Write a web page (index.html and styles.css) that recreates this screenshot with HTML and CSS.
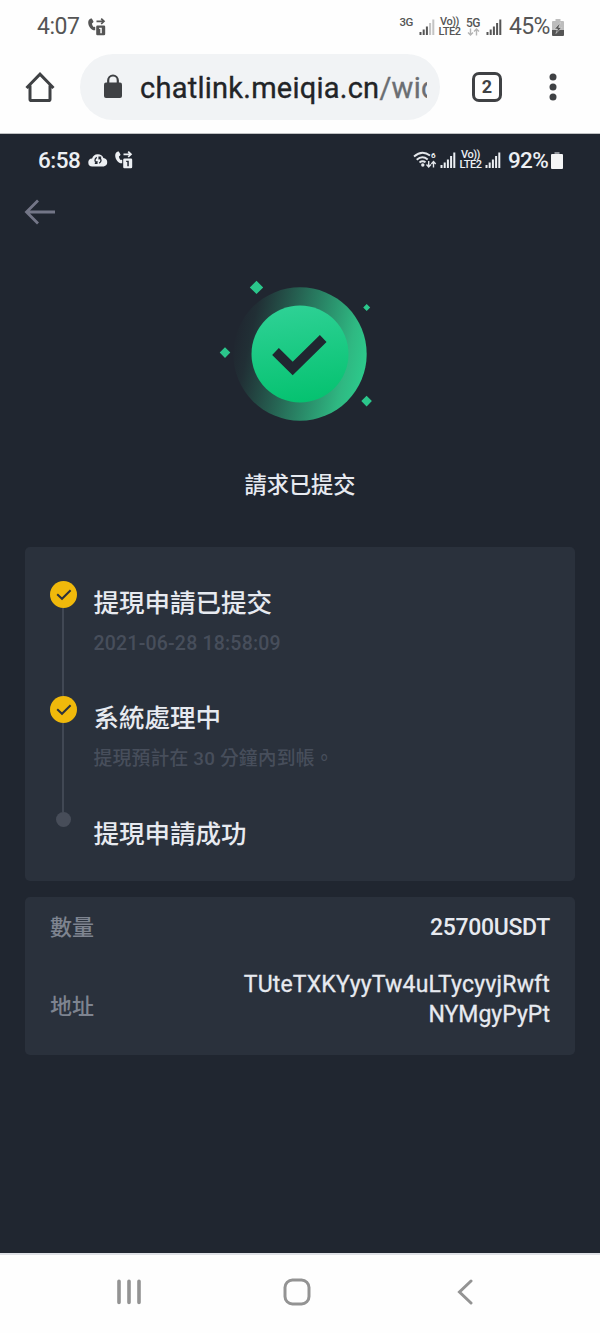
FILE: index.html
```html
<!DOCTYPE html>
<html lang="zh-Hant">
<head>
<meta charset="utf-8">
<title>請求已提交</title>
<link rel="stylesheet" href="styles.css">
</head>
<body>
<svg class="defs" width="0" height="0">
  <symbol id="call" viewBox="0 0 18 18">
    <path fill="currentColor" d="M1 1.800Q2.500.3 3.800.6L5.500 3.600Q5.600 4.600 3.900 5.500C4.100 7 4.800 8 5.600 8.900Q6.600 8.500 7.200 9V12.300C4 12.800.2 9 .2 4.500Q.2 2.700 1 1.800Z"/>
    <path fill="none" stroke="currentColor" stroke-width="1.700" d="M8.500 3.300h7.500M13.200.6 16 3.300 13.200 6"/>
    <path fill="currentColor" fill-rule="evenodd" d="M9.400 7.500H16q1.200 0 1.200 1.200V16q0 1.200-1.200 1.200H9.400q-1.200 0-1.200-1.200V8.700q0-1.200 1.200-1.200ZM11.200 9.700v1.300h1.100v4.300h1.500V9.700Z"/>
  </symbol>
  <symbol id="bars" viewBox="0 0 16 16">
    <path fill="currentColor" d="M.5 13h2v3h-2zM3.700 10.500h2V16h-2zM6.900 7.500h2V16h-2zM10.100 4h2v12h-2zM13.300.5h2V16h-2z"/>
  </symbol>
</svg>

<header class="status status-light">
  <span class="clock">4:07</span>
  <svg class="call"><use href="#call"/></svg>
  <span class="net net-3g">3G</span>
  <svg class="bars bars-weak" viewBox="0 0 16 16"><path fill="#555" d="M.5 13h2v3h-2zM3.700 10.500h2V16h-2zM6.900 7.500h2V16h-2z"/><path fill="#c4c4c4" d="M10.100 4h2v12h-2zM13.300.5h2V16h-2z"/></svg>
  <span class="volte"><span>Vo))</span><span>LTE2</span></span>
  <span class="net-5g"><span>5G</span><svg width="13" height="8" viewBox="0 0 13 8"><path fill="none" stroke="#b5b5b5" stroke-width="1.400" d="M3.500.5v6.500M1 4.500l2.500 2.500L6 4.500M9.500 7.500V1M7 3.500 9.500 1 12 3.500"/></svg></span>
  <svg class="bars"><use href="#bars"/></svg>
  <span class="percent">45%</span>
  <svg class="battery" viewBox="0 0 12 17"><path fill="#bdbdbd" d="M3.500 0h5v2H11q1 0 1 1v8H0V3q0-1 1-1h2.500Z"/><path fill="#555" d="M0 11h12v5q0 1-1 1H1q-1 0-1-1Z"/><path fill="#555" stroke="#eee" stroke-width=".5" d="M8.300 3.500 2.500 10h3l-1.500 4.500L9.600 8.500H6.700Z"/></svg>
</header>

<nav class="toolbar">
  <svg class="home" viewBox="0 0 32 32"><path fill="none" stroke="#3f4144" stroke-width="3" d="M2.500 17 16 3.200 29.500 17M6 14.500V28.200q0 1.300 1.300 1.300H24.700q1.300 0 1.300-1.300V14.500"/></svg>
  <div class="omnibox">
    <svg class="lock" viewBox="0 0 20 25"><rect x="1" y="8.500" width="18" height="15.500" rx="2" fill="#3f4144"/><path fill="none" stroke="#3f4144" stroke-width="2.200" d="M5.200 10V6.300a4.800 4.800 0 0 1 9.600 0V10"/></svg>
    <div class="url">chatlink.meiqia.cn<span class="path">/wid</span></div>
  </div>
  <span class="tabs">2</span>
  <svg class="more" viewBox="0 0 8 30"><g fill="#3f4144"><circle cx="4" cy="5" r="3.500"/><circle cx="4" cy="15" r="3.500"/><circle cx="4" cy="25" r="3.500"/></g></svg>
</nav>

<main class="app">
  <div class="status status-dark">
    <span class="clock">6:58</span>
    <svg class="cloud" viewBox="0 0 20 14"><path fill="#eceff3" d="M4.500 13.500a4 4 0 0 1-.4-8A6 6 0 0 1 15.400 5a4.300 4.300 0 0 1 .3 8.500Z"/><path fill="none" stroke="#202630" stroke-width="1.300" d="M8.800 4.300A3.300 3.300 0 0 0 8.800 10.200M8.900 8v2.400H6.800M11.200 10.200a3.300 3.300 0 0 0 0-5.900M11.100 6.500V4.100h2.100"/></svg>
    <svg class="call"><use href="#call"/></svg>
    <svg class="wifi" viewBox="0 0 25 18"><g fill="none" stroke="#e3e6ea" stroke-width="1.900"><path d="M1 5.500Q9 -1.500 17 4.500M3.700 8.700q5.500-4.700 11-.3M6.500 11.500q3-2.300 6-.2"/><path stroke-width="1.400" d="M15.700 10v6M13.500 13.500l2.200 2.500 2.200-2.500M20.500 16.500V10.500M18.300 13l2.200-2.500 2.200 2.500"/></g><circle cx="9.800" cy="14" r="1.700" fill="#e3e6ea"/><text class="wifi-gen" x="18" y="7.200">6</text></svg>
    <svg class="bars"><use href="#bars"/></svg>
    <span class="volte"><span>Vo))</span><span>LTE2</span></span>
    <svg class="bars bars-second"><use href="#bars"/></svg>
    <span class="percent">92%</span>
    <svg class="battery" viewBox="0 0 12 17"><path fill="#8d9198" d="M3.500 0h5v3h-5z"/><path fill="#f4f5f6" d="M1 2h10q1 0 1 1v13q0 1-1 1H1q-1 0-1-1V3q0-1 1-1Z"/></svg>
  </div>

  <svg class="back" viewBox="0 0 32 26"><path fill="none" stroke="#737687" stroke-width="2.800" d="M14 1.500 2.500 13 14 24.500M2.500 13H31"/></svg>

  <section class="result">
    <svg class="success" viewBox="0 0 160 144">
      <defs>
        <linearGradient id="ring" x1="0" y1=".38" x2="1" y2=".6"><stop offset="0" stop-color="#2ebd85" stop-opacity="0"/><stop offset=".12" stop-color="#2ebd85" stop-opacity=".06"/><stop offset=".5" stop-color="#2fc58a" stop-opacity=".5"/><stop offset=".85" stop-color="#31cc8d" stop-opacity=".88"/><stop offset="1" stop-color="#2dd491" stop-opacity=".95"/></linearGradient>
        <linearGradient id="disc" x1=".4" y1="0" x2=".55" y2="1"><stop offset="0" stop-color="#2ed195"/><stop offset="1" stop-color="#05c270"/></linearGradient>
      </defs>
      <circle cx="80" cy="76" r="66.700" fill="url(#ring)"/>
      <circle cx="80" cy="76" r="48.500" fill="url(#disc)"/>
      <path fill="none" stroke="#202630" stroke-width="9.500" d="M55.500 73.500 72.700 90.500 103.200 60.500"/>
      <g fill="#2bc68b"><path d="M36.500 2.700 43.200 9.400l-6.700 6.700-6.700-6.700zM146.700 26l3.500 3.500-3.500 3.500-3.500-3.500zM5 69.300l5.300 5.300L5 79.900-.3 74.600zM146.600 117.800l5.300 5.300-5.300 5.300-5.300-5.300z"/></g>
    </svg>
    <h1 class="heading">請求已提交</h1>
  </section>

  <section class="card steps">
    <div class="step">
      <div class="rail"><svg class="tick" viewBox="0 0 27 27"><circle cx="13.500" cy="13.500" r="13.500" fill="#f0b90b"/><path fill="none" stroke="#2b313b" stroke-width="2" d="M7.200 13.200 12 17.800 20.600 9.300"/></svg></div>
      <div class="body"><h2>提現申請已提交</h2><p class="date">2021-06-28 18:58:09</p></div>
    </div>
    <div class="step">
      <div class="rail"><svg class="tick" viewBox="0 0 27 27"><circle cx="13.500" cy="13.500" r="13.500" fill="#f0b90b"/><path fill="none" stroke="#2b313b" stroke-width="2" d="M7.200 13.200 12 17.800 20.600 9.300"/></svg></div>
      <div class="body"><h2>系統處理中</h2><p>提現預計在 30 分鐘內到帳。</p></div>
    </div>
    <div class="step">
      <div class="rail rail-last"><i class="dot"></i></div>
      <div class="body"><h2>提現申請成功</h2></div>
    </div>
  </section>

  <section class="card details">
    <div class="row"><span class="label">數量</span><span class="amount">25700USDT</span></div>
    <div class="row row-address"><span class="label">地址</span><span class="address"><span class="address-head">TUteTXKYyyTw4uLTycyvjRwft</span><br><span class="address-tail">NYMgyPyPt</span></span></div>
  </section>
</main>

<footer class="navbar">
  <svg width="26" height="26" viewBox="0 0 26 26"><path stroke="#939393" stroke-width="3.600" stroke-linecap="round" d="M3 2.300V23.500M13 2.300V23.500M23 2.300V23.500"/></svg>
  <svg class="nav-home" width="28" height="28" viewBox="0 0 28 28"><rect x="2" y="2" width="24" height="24" rx="7.500" fill="none" stroke="#939393" stroke-width="3"/></svg>
  <svg width="16" height="26" viewBox="0 0 16 26"><path fill="none" stroke="#939393" stroke-width="3" stroke-linecap="round" d="M14 2 2.500 13 14 24"/></svg>
</footer>
</body>
</html>
```
FILE: styles.css
```css
* { box-sizing: border-box; }
body {
  margin: 0;
  width: 600px;
  height: 1333px;
  display: flex;
  flex-direction: column;
  overflow: hidden;
  background: #fefefe;
  font-family: Roboto, "Noto Sans CJK TC", sans-serif;
}
svg { display: block; flex: none; }
.defs { position: absolute; }
h1, h2, p { margin: 0; font-weight: 500; white-space: nowrap; }

.status { display: flex; align-items: center; flex: none; white-space: nowrap; }
.status-light { height: 54px; padding: 0 36px 0 37px; color: #555; }
.status-dark { height: 52px; padding: 0 37px 0 38px; color: #eceff3; }
.clock { font-size: 23px; line-height: 26px; letter-spacing: -.5px; width: 51px; }
.status-dark .clock { width: 50px; font-weight: 500; font-size: 22.5px; }
.call { width: 18px; height: 18px; }
.status-light .net-3g { margin-left: auto; }
.net { font-size: 11.5px; font-weight: 500; line-height: 12px; height: 22px; letter-spacing: -.4px; }
.bars { width: 16px; height: 16px; }
.status-light .bars { margin-left: 6px; }
.volte, .net-5g { display: flex; flex-direction: column; align-items: center; font-size: 11px; font-weight: 500; line-height: 10px; letter-spacing: -.5px; }
.volte { width: 23px; margin-left: 3px; }
.net-5g { width: 14px; margin-left: 5px; font-size: 12px; }
.percent { font-size: 23px; line-height: 26px; letter-spacing: -.7px; margin-left: 7px; width: 43px; }
.battery { width: 12px; height: 17px; }
.status-dark .percent { font-weight: 500; font-size: 22.5px; }
.cloud { width: 20px; height: 14px; margin-right: 7px; }
.wifi { width: 25px; height: 18px; margin-left: auto; margin-right: 2px; }
.wifi-gen { font: 700 8px Roboto, sans-serif; fill: #eceff3; }
.bars-second { margin-left: 3px; }

.toolbar { display: flex; align-items: center; flex: none; height: 80px; padding-bottom: 14px; padding-left: 24px; border-bottom: 1px solid #bfc1c3; }
.home { width: 32px; height: 32px; margin-right: 24px; }
.omnibox { display: flex; align-items: center; width: 360px; height: 66px; padding: 0 13px 0 23px; border-radius: 33px; background: #f1f3f5; }
.lock { width: 20px; height: 25px; margin-right: 17px; }
.url { width: 287px; padding-top: 2px; overflow: hidden; white-space: nowrap; font-size: 29px; line-height: 40px; letter-spacing: .25px; color: #222427; -webkit-text-stroke: .35px; }
.path { color: #6b6e72; }
.tabs { width: 30px; height: 30px; margin-left: 32px; border: 3px solid #3f4144; border-radius: 7px; color: #3f4144; font-size: 18px; font-weight: 700; line-height: 24px; text-align: center; }
.more { width: 8px; height: 30px; margin-left: 47px; }

.app { flex: none; height: 1119px; background: #202630; color: #e7eaf0; }
.back { width: 32px; height: 26px; margin: 13px 0 0 24px; }
.result { display: flex; flex-direction: column; align-items: center; height: 322px; padding-top: 53px; }
.success { width: 160px; height: 144px; overflow: visible; }
.heading { margin-top: 47px; font-size: 22.2px; line-height: 32px; }
.card { margin: 0 25px; border-radius: 5px; background: #2a313c; }
.steps { height: 334px; padding: 33.500px 25px 0; }
.step { display: flex; height: 115.500px; }
.rail { display: flex; flex-direction: column; align-items: center; width: 27px; }
.rail::after { content: ""; flex: 1; width: 2px; margin-right: 1px; background: #414854; }
.tick { width: 27px; height: 27px; }
.rail-last::after { content: none; }
.dot { width: 15px; height: 15px; border-radius: 50%; background: #474d59; }
.body { margin-left: 16.500px; padding-top: 4px; }
.body h2 { font-size: 25.500px; line-height: 36px; }
.body p { margin-top: 9px; font-size: 18.800px; line-height: 28px; letter-spacing: .2px; color: #474e5b; }
.body .date { font-size: 19.500px; letter-spacing: .2px; }
.details { height: 158px; margin-top: 16px; padding: 14px 25px 0; }
.row { display: flex; align-items: center; justify-content: space-between; height: 32px; font-size: 22px; }
.label { margin-top: -5px; color: #7e8490; font-weight: 500; }
.amount { font-size: 23px; font-weight: 500; letter-spacing: -.3px; }
.row-address { height: 60px; margin-top: 26px; padding-top: 2px; }
.row-address .label { margin-top: 7px; }
.address { font-size: 23px; line-height: 30px; text-align: right; -webkit-text-stroke: .3px; }
.address-head { letter-spacing: .18px; }

.navbar { flex: 1; display: flex; align-items: flex-start; padding: 24px 127px 0 116px; justify-content: space-between; border-top: 2px solid #dfe1e6; }
.nav-home { margin: -1px 6px 0 0; }
```
